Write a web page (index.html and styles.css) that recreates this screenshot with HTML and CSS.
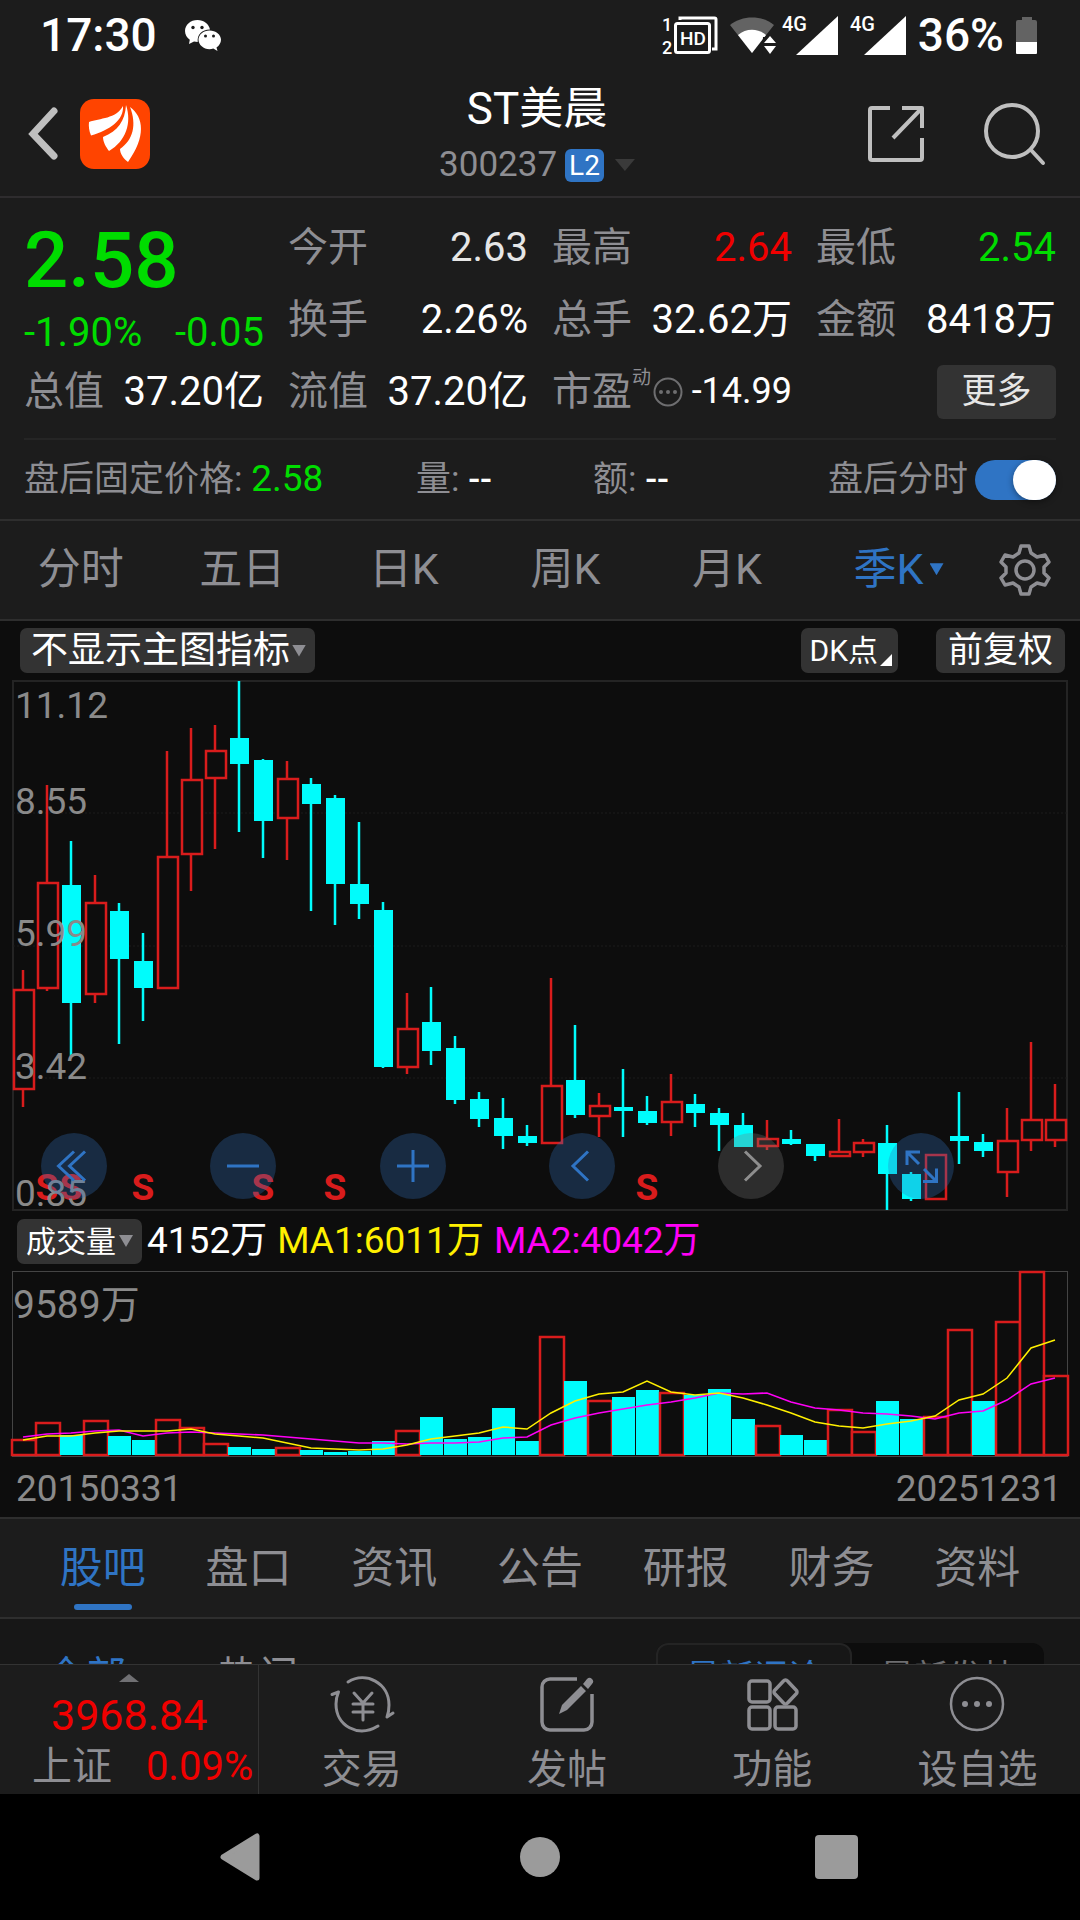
FILE: index.html
```html
<!DOCTYPE html>
<html lang="zh-CN">
<head>
  <meta charset="UTF-8">
  <meta name="viewport" content="width=device-width, initial-scale=1.0">
  <title>ST美晨 300237</title>
  <link rel="stylesheet" href="styles.css">
</head>
<body>
  <div class="app">

    <div class="status-bar">
      <span class="clock">17:30</span>
      <svg class="wechat" width="36" height="32" viewBox="0 0 36 32">
        <path fill="#fff" d="M12.500 0C5.600 0 0 4.900 0 11c0 3.600 1.900 6.700 4.800 8.700L4 24l5-2.600c1.200.3 2.300.5 3.700.5C12 14.500 17 9.500 25 9.600 24 4 18.800 0 12.500 0Z"/>
        <path fill="#fff" d="M24.500 10.500c-6 0-11 4.200-11 9.300s5 9.400 11 9.400c1.400 0 2.600-.2 3.800-.6L32.500 31l-1-3.600c2.700-1.700 4.500-4.400 4.500-7.600 0-5.100-5.200-9.300-11.500-9.300Z"/>
        <g fill="#1c1c1c"><circle cx="8" cy="7.500" r="1.700"/><circle cx="17" cy="7.500" r="1.700"/><circle cx="20.500" cy="16" r="1.500"/><circle cx="28.500" cy="16" r="1.500"/></g>
      </svg>
      <div class="status-icons">
        <svg width="56" height="40" viewBox="0 0 56 40">
          <g fill="none" stroke="#fff" stroke-width="3">
            <rect x="13.500" y="7.500" width="34" height="29" rx="2"/>
            <path d="M18 4V2h34.500a1.500 1.500 0 0 1 1.500 1.500V33h-4"/>
          </g>
          <text class="svg-num" x="0" y="15" font-size="18">1</text>
          <text class="svg-num" x="0" y="38" font-size="18">2</text>
          <text class="svg-num" x="18" y="29" font-size="19">HD</text>
        </svg>
        <svg class="wifi" width="46" height="40" viewBox="0 0 46 40">
          <path fill="#636363" d="M0 9C12-1 32-1 44 9L22 37Z"/>
          <path fill="#fff" d="M8 19c8-7 20-7 28 0L22 37Z"/>
          <path fill="#1c1c1c" d="M33 21h13v19H32z"/>
          <path fill="#fff" d="M40 20l6 7H34zM34 30h12l-6 8z"/>
        </svg>
        <svg width="56" height="40" viewBox="0 0 56 40">
          <text class="svg-num" x="0" y="15" font-size="20">4G</text>
          <path fill="#fff" d="M56 0v39H14z"/>
        </svg>
        <svg width="56" height="40" viewBox="0 0 56 40">
          <text class="svg-num" x="0" y="15" font-size="20">4G</text>
          <path fill="#fff" d="M56 0v39H14z"/>
        </svg>
        <span class="clock">36%</span>
        <svg width="22" height="40" viewBox="0 0 22 40">
          <path fill="#636363" d="M6 1h10v3h3a2 2 0 0 1 2 2v21H0V6a2 2 0 0 1 2-2h4z"/>
          <path fill="#fff" d="M0 26h21v11a1 1 0 0 1-1 1H1a1 1 0 0 1-1-1z"/>
        </svg>
      </div>
    </div>

    <header class="header">
      <div class="header-left">
        <button class="icon-btn" aria-label="返回">
          <svg width="30" height="56" viewBox="0 0 30 56" fill="none" stroke="#bfbfbf" stroke-width="7" stroke-linecap="round" stroke-linejoin="miter"><path d="M26 5L5 28l21 22"/></svg>
        </button>
        <svg width="70" height="70" viewBox="0 0 70 70">
          <rect width="70" height="70" rx="14" fill="#ff4400"/>
          <g fill="#fff">
            <path d="M9 23C20 19 36 20 43 7c1 14-13 24-32 29.500C9 32 8.500 27 9 23Z"/>
            <path d="M46 6c6 18 0 36-17 46-3-4-6-9-6-14C38 32 45 22 46 6Z"/>
            <path d="M50 8c14 10 16 30-2 55-4-3-8-8-8-13C53 41 57 26 50 8Z"/>
          </g>
        </svg>
      </div>
      <div class="header-title">
        <h1>ST美晨</h1>
        <button class="stock-code">300237 <span class="badge">L2</span><i class="tri tri-code"></i></button>
      </div>
      <div class="header-right">
        <button class="icon-btn" aria-label="分享">
          <svg width="56" height="56" viewBox="0 0 56 56" fill="none" stroke="#bfbfbf" stroke-width="4" stroke-linejoin="round"><path d="M22 2H4a2 2 0 0 0-2 2v48a2 2 0 0 0 2 2h48a2 2 0 0 0 2-2V32M34 2h20v20M54 2L25 32"/></svg>
        </button>
        <button class="icon-btn" aria-label="搜索">
          <svg width="62" height="62" viewBox="0 0 62 62" fill="none" stroke="#bfbfbf" stroke-width="4" stroke-linecap="round"><circle cx="28" cy="28" r="26"/><path d="M47 47l12 13"/></svg>
        </button>
      </div>
    </header>

    <section class="quote">
      <div class="price-box">
        <div class="price green">2.58</div>
        <div class="change green"><span>-1.90%</span><span>-0.05</span></div>
      </div>
      <div class="cell"><span class="label">今开</span><span class="soft">2.63</span></div>
      <div class="cell"><span class="label">最高</span><span class="red">2.64</span></div>
      <div class="cell"><span class="label">最低</span><span class="green">2.54</span></div>
      <div class="cell"><span class="label">换手</span><span>2.26%</span></div>
      <div class="cell"><span class="label">总手</span><span>32.62万</span></div>
      <div class="cell"><span class="label">金额</span><span>8418万</span></div>
      <div class="cell"><span class="label">总值</span><span>37.20亿</span></div>
      <div class="cell"><span class="label">流值</span><span>37.20亿</span></div>
      <div class="cell">
        <span class="label pe">市盈<sup>动</sup>
          <svg width="30" height="30" viewBox="0 0 30 30"><circle cx="15" cy="15" r="13.500" fill="none" stroke="#6e6e70" stroke-width="2"/><g fill="#6e6e70"><circle cx="8" cy="15" r="2"/><circle cx="15" cy="15" r="2"/><circle cx="22" cy="15" r="2"/></g></svg>
        </span>
        <span class="small">-14.99</span>
      </div>
      <div class="cell cell-more"><button class="more">更多</button></div>
    </section>

    <section class="after-hours">
      <div class="ah-item">盘后固定价格: <span class="ah-num green">2.58</span></div>
      <div class="ah-item">量: <b>--</b></div>
      <div class="ah-item">额: <b>--</b></div>
      <label class="ah-item ah-switch">盘后分时 <input type="checkbox" class="switch" checked></label>
    </section>

    <nav class="period-tabs">
      <button>分时</button>
      <button>五日</button>
      <button>日K</button>
      <button>周K</button>
      <button>月K</button>
      <button class="active"><span>季K<i class="tri tri-period"></i></span></button>
      <button class="gear" aria-label="设置">
        <svg width="52" height="54" viewBox="0 0 52 54" fill="none" stroke="#8e8e93" stroke-width="3.500" stroke-linejoin="round"><path d="M22 3h8l2 7 6 4 8-2 4 7-5 5v6l5 5-4 7-8-2-6 4-2 7h-8l-2-7-6-4-8 2-4-7 5-5v-6l-5-5 4-7 8 2 6-4z"/><circle cx="26" cy="27" r="9"/></svg>
      </button>
    </nav>

    <section class="charts">
      <div class="chart-tools">
        <button class="chip chip-main">不显示主图指标<i class="tri tri-chip"></i></button>
        <button class="chip chip-dk">DK点<i class="corner"></i></button>
        <button class="chip">前复权</button>
      </div>
      <div class="k-chart">
        <svg id="kline" viewBox="0 0 1080 532"></svg>
        <div class="chart-controls">
          <button class="round" aria-label="最左"><svg viewBox="0 0 66 66"><path d="M33 18.500L17.500 33 33 47.500M44 18.500L28.500 33 44 47.500"/></svg></button>
          <button class="round" aria-label="缩小"><svg viewBox="0 0 66 66"><path d="M17 33h32"/></svg></button>
          <button class="round" aria-label="放大"><svg viewBox="0 0 66 66"><path d="M17 33h32M33 17v32"/></svg></button>
          <button class="round" aria-label="左移"><svg viewBox="0 0 66 66"><path d="M39 18.500L24 33l15 14.500"/></svg></button>
          <button class="round round-off" aria-label="右移"><svg viewBox="0 0 66 66"><path d="M27 18.500L42 33 27 47.500"/></svg></button>
          <button class="round" aria-label="全屏"><svg viewBox="0 0 66 66"><path d="M32 19H19v13M19 19l12 12M35 48.500h13.500v-13M48.500 48.500L36 36"/></svg></button>
        </div>
      </div>
      <div class="vol-legend">
        <button class="chip chip-vol">成交量<i class="tri tri-chip"></i></button>
        <span>4152万</span>
        <span class="ma1">MA1:6011万</span>
        <span class="ma2">MA2:4042万</span>
      </div>
      <svg id="volume" viewBox="0 0 1080 188"></svg>
      <div class="dates"><span>20150331</span><span>20251231</span></div>
    </section>

    <nav class="info-tabs">
      <a href="#" class="active">股吧</a>
      <a href="#">盘口</a>
      <a href="#">资讯</a>
      <a href="#">公告</a>
      <a href="#">研报</a>
      <a href="#">财务</a>
      <a href="#">资料</a>
    </nav>

    <section class="feed">
      <div class="feed-head">
        <a href="#" class="active">全部</a>
        <a href="#">热门</a>
        <div class="segment">
          <button class="active">最新评论</button>
          <button>最新发帖</button>
        </div>
      </div>
    </section>

    <footer class="bottom-bar">
      <a href="#" class="index-box">
        <i class="tri-up"></i>
        <span class="index-value">3968.84</span>
        <span class="index-row"><span class="label">上证</span><span>0.09%</span></span>
      </a>
      <a href="#" class="action">
        <svg width="64" height="56" viewBox="0 0 64 56" fill="none" stroke="#8e8e93" stroke-width="3" stroke-linejoin="round" stroke-linecap="round">
          <path d="M18 6C36-5 59 7 59 29c0 4-.5 8-2 12l6-4"/>
          <path d="M48 50C28 62 6 50 6 28c0-4 .8-8 2.500-12L2 18.500"/>
          <path d="M24 17l9 10 9-10M33 27v17M23 28h20M23 36h20"/>
        </svg>
        <span>交易</span>
      </a>
      <a href="#" class="action">
        <svg width="54" height="56" viewBox="0 0 54 56">
          <path d="M37 3H10a8 8 0 0 0-8 8v35a8 8 0 0 0 8 8h34a8 8 0 0 0 8-8V18" fill="none" stroke="#8e8e93" stroke-width="3.500"/>
          <path fill="#8e8e93" d="M19 38l3-9 19-19 5 5-19 19zM43 8l4-5a3 3 0 0 1 5 5l-4 5z"/>
        </svg>
        <span>发帖</span>
      </a>
      <a href="#" class="action">
        <svg width="54" height="56" viewBox="0 0 54 56" fill="none" stroke="#8e8e93" stroke-width="3.500" stroke-linejoin="round">
          <rect x="4" y="5" width="21" height="21" rx="3"/>
          <rect x="4" y="31" width="21" height="22" rx="3"/>
          <rect x="30" y="31" width="21" height="22" rx="3"/>
          <path d="M38.500 5a2.500 2.500 0 0 1 4 0l8.500 9a2.500 2.500 0 0 1 0 4l-8.500 9a2.500 2.500 0 0 1-4 0l-8.500-9a2.500 2.500 0 0 1 0-4z"/>
        </svg>
        <span>功能</span>
      </a>
      <a href="#" class="action">
        <svg width="56" height="56" viewBox="0 0 56 56"><circle cx="28" cy="28" r="26" fill="none" stroke="#8e8e93" stroke-width="2.500"/><g fill="#8e8e93"><circle cx="16" cy="28" r="3"/><circle cx="28" cy="28" r="3"/><circle cx="40" cy="28" r="3"/></g></svg>
        <span>设自选</span>
      </a>
    </footer>

    <div class="system-nav">
      <button aria-label="Back"><svg width="44" height="50" viewBox="0 0 44 50"><path d="M36 4v42L2 25z" fill="#9b9b9b" stroke="#9b9b9b" stroke-width="5" stroke-linejoin="round"/></svg></button>
      <button aria-label="Home"><svg width="44" height="50" viewBox="0 0 44 50"><circle cx="22" cy="25" r="20" fill="#9b9b9b"/></svg></button>
      <button aria-label="Recent"><svg width="44" height="50" viewBox="0 0 44 50"><rect x="0" y="3" width="43" height="44" rx="4" fill="#9b9b9b"/></svg></button>
    </div>
  </div>

  <script src="script.js"></script>
</body>
</html>
```
FILE: styles.css
```css
* {
  box-sizing: border-box;
}

body {
  margin: 0;
  background: #1c1c1c;
  color: #fff;
  font-family: Roboto, "Noto Sans CJK SC", sans-serif;
  font-size: 40px;
  line-height: 1.2;
}

button {
  border: none;
  background: none;
  padding: 0;
  margin: 0;
  color: inherit;
  font-family: inherit;
  font-size: inherit;
  line-height: inherit;
}

a {
  color: inherit;
  text-decoration: none;
}

svg {
  display: block;
  overflow: visible;
}

.app {
  height: 100vh;
  display: flex;
  flex-direction: column;
}

.app > * {
  flex-shrink: 0;
}

.green { color: #00dc00; }
.red { color: #f00000; }
.soft { color: #e6e6e6; }
.label { color: #8e8e93; }
.small { font-size: 36px; }

.tri {
  display: inline-block;
  width: 14px;
  height: 12px;
  background: #8e8e93;
  clip-path: polygon(0 0, 100% 0, 50% 100%);
}

/* status bar */
.status-bar {
  height: 71px;
  padding: 0 42px 0 40px;
  display: flex;
  align-items: center;
}

.clock {
  font-size: 46px;
  font-weight: 500;
}

.wechat {
  margin-left: 28px;
}

.status-icons {
  margin-left: auto;
  display: flex;
  align-items: center;
  gap: 12px;
}

.wifi {
  margin-right: -6px;
}

.svg-num {
  font-family: Roboto, sans-serif;
  font-weight: 500;
  fill: #fff;
}

/* header */
.header {
  height: 127px;
  padding: 0 34px 0 28px;
  display: grid;
  grid-template-columns: 1fr auto 1fr;
  align-items: center;
  border-bottom: 2px solid #2e2c2e;
}

.header-left,
.header-right {
  display: flex;
  align-items: center;
}

.header-left {
  gap: 22px;
}

.header-right {
  justify-content: flex-end;
  gap: 60px;
}

.header-title {
  padding-top: 5px;
  display: flex;
  flex-direction: column;
  align-items: center;
}

.header-title h1 {
  margin: 0;
  font-size: 44px;
  font-weight: 400;
  line-height: 58px;
}

.stock-code {
  display: flex;
  align-items: center;
  color: #8e8e93;
  font-size: 35px;
  line-height: 54px;
}

.badge {
  margin-left: 8px;
  padding: 0 4px;
  border-radius: 6px;
  background: #2f74c4;
  color: #fff;
  font-size: 28px;
  line-height: 33px;
}

.tri-code {
  width: 20px;
  margin-left: 11px;
  background: #3a3a3a;
}

/* quote numbers */
.quote {
  margin: 0 24px;
  padding: 14px 0 10px;
  display: grid;
  grid-template-columns: repeat(4, 1fr);
  grid-auto-rows: 72px;
  column-gap: 24px;
  border-bottom: 2px solid #252525;
}

.price-box {
  grid-row: span 2;
}

.price {
  font-size: 78px;
  font-weight: 500;
  line-height: 98px;
}

.change {
  display: flex;
  justify-content: space-between;
  line-height: 46px;
}

.cell {
  display: flex;
  justify-content: space-between;
  align-items: center;
  white-space: nowrap;
}

.cell-more {
  justify-content: flex-end;
}

.pe {
  display: flex;
  align-items: center;
}

.pe sup {
  align-self: flex-start;
  font-size: 19px;
  line-height: 20px;
}

.pe svg {
  margin-left: 2px;
}

.more {
  width: 119px;
  height: 54px;
  border-radius: 6px;
  background: #333;
  color: #e6e6e6;
  font-size: 35px;
}

/* after hours row */
.after-hours {
  padding: 0 24px;
  height: 81px;
  display: grid;
  grid-template-columns: 392fr 177fr 200fr 263fr;
  align-items: center;
  border-bottom: 2px solid #2e2e2e;
  color: #8e8e93;
  font-size: 35px;
  white-space: nowrap;
}

.after-hours b {
  color: #fff;
  font-weight: 500;
}

.ah-num {
  font-size: 37px;
}

.ah-switch {
  display: flex;
  align-items: center;
  justify-content: flex-end;
  gap: 7px;
}

.switch {
  appearance: none;
  margin: 0;
  width: 81px;
  height: 40px;
  border-radius: 20px;
  background: #444;
  display: flex;
}

.switch::before {
  content: "";
  width: 43px;
  height: 40px;
  border-radius: 20px;
  background: #fff;
  box-shadow: 0 2px 6px rgba(0, 0, 0, 0.4);
}

.switch:checked {
  background: #2f74c4;
  justify-content: flex-end;
}

/* period tabs */
.period-tabs {
  height: 100px;
  display: flex;
  border-bottom: 2px solid #2e2e2e;
  color: #8e8e93;
  font-size: 43px;
}

.period-tabs button {
  flex: 162;
}

.period-tabs .gear {
  flex: 111;
  display: flex;
  align-items: center;
  justify-content: center;
}

.period-tabs .active {
  color: #2f74c4;
}

.period-tabs span {
  position: relative;
}

.tri-period {
  position: absolute;
  left: 100%;
  top: 50%;
  margin: -6px 0 0 6px;
  background: #2f74c4;
}

/* charts */
.charts {
  background: #0d0d0d;
  border-bottom: 2px solid #2e2e2e;
}

.chart-tools {
  padding: 7px 15px 7px 20px;
  display: flex;
}

.chip {
  height: 45px;
  padding: 0 12px;
  border-radius: 7px;
  background: #333;
  font-size: 35px;
  line-height: 45px;
  white-space: nowrap;
}

.chip-main {
  margin-right: auto;
  padding: 0 9px 0 11px;
  display: flex;
  align-items: center;
  gap: 2px;
  font-size: 37px;
}

.chip-dk {
  margin-right: 38px;
  padding: 0 6px 0 8px;
  display: flex;
  align-items: center;
  font-size: 30px;
}

.corner {
  align-self: flex-end;
  width: 12px;
  height: 12px;
  margin: 0 0 7px 2px;
  background: #fff;
  clip-path: polygon(100% 0, 100% 100%, 0 100%);
}

.k-chart {
  position: relative;
}

.k-chart svg,
#volume {
  width: 100%;
}

.chart-controls {
  position: absolute;
  left: 0;
  right: 0;
  bottom: 13px;
  padding: 0 11.7% 0 3.8%;
  display: flex;
  justify-content: space-between;
}

.round {
  width: 66px;
  height: 66px;
  border-radius: 50%;
  background: rgba(50, 112, 190, 0.3);
}

.round path {
  fill: none;
  stroke: #2f74c4;
  stroke-width: 3;
}

.round-off {
  background: rgba(120, 120, 120, 0.3);
}

.round-off path {
  stroke: #8e8e8e;
}

.axis-text {
  fill: #8a8a8a;
  font-family: Roboto, "Noto Sans CJK SC", sans-serif;
  font-size: 37px;
}

.axis-vol {
  font-size: 39px;
}

.sell-mark {
  fill: #d91c1c;
  font-family: Roboto, sans-serif;
  font-size: 37px;
  font-weight: 700;
  text-anchor: middle;
}

.frame {
  fill: none;
  stroke: #242424;
  stroke-width: 2;
}

.frame-vol {
  stroke: #444;
  stroke-width: 1;
}

.grid-line {
  stroke: #1d1d1d;
  stroke-width: 1;
  stroke-dasharray: 2 2;
}

.up {
  fill: #0d0d0d;
  stroke: #d91c1c;
  stroke-width: 2.5;
}

.down {
  fill: #00fcfc;
}

.wick-up {
  stroke: #d91c1c;
  stroke-width: 2.5;
}

.wick-down {
  stroke: #00fcfc;
  stroke-width: 2.5;
}

.line-ma1,
.line-ma2 {
  fill: none;
  stroke: #fff000;
  stroke-width: 1.5;
}

.line-ma2 {
  stroke: #ff00f6;
}

.vol-legend {
  height: 58px;
  padding-left: 17px;
  display: flex;
  align-items: center;
  font-size: 37px;
  line-height: 44px;
  white-space: nowrap;
}

.vol-legend span {
  margin-right: 10px;
}

.chip-vol {
  margin-right: 5px;
  padding: 0 9px;
  display: flex;
  align-items: center;
  gap: 3px;
  font-size: 30px;
}

.ma1 { color: #fff000; }
.ma2 { color: #ff00f6; }

.dates {
  padding: 3px 18px 0 16px;
  display: flex;
  justify-content: space-between;
  color: #8a8a8a;
  font-size: 37px;
  line-height: 56px;
}

/* info tabs */
.info-tabs {
  height: 100px;
  padding: 0 30px;
  display: flex;
  border-bottom: 2px solid #2e2e2e;
  color: #8e8e93;
  font-size: 43px;
  line-height: 98px;
}

.info-tabs a {
  flex: 1;
  text-align: center;
  position: relative;
}

.info-tabs .active,
.feed .active {
  color: #2f74c4;
}

.info-tabs .active::after {
  content: "";
  position: absolute;
  left: 50%;
  bottom: 7px;
  width: 58px;
  height: 6px;
  margin-left: -29px;
  border-radius: 3px;
  background: #2f74c4;
}

.feed {
  flex: 1 1 0;
  min-height: 0;
  overflow: hidden;
  background: #171717;
}

.feed-head {
  padding: 24px 36px 24px 46px;
  display: flex;
  align-items: center;
  gap: 92px;
  color: #8e8e93;
  font-size: 40px;
}

.segment {
  margin-left: auto;
  width: 388px;
  height: 68px;
  display: flex;
  border-radius: 12px;
  background: #0d0d0d;
  color: #6e6e70;
  font-size: 34px;
}

.segment button {
  flex: 1;
  border-radius: 12px;
}

.segment .active {
  background: #171717;
  border: 2px solid #242424;
}

/* bottom bar */
.bottom-bar {
  height: 130px;
  display: flex;
  border-top: 1px solid #333;
  background: #1c1c1c;
  color: #8e8e93;
}

.index-box {
  width: 24%;
  padding: 9px 5px 0 32px;
  display: flex;
  flex-direction: column;
  border-right: 1px solid #333;
  color: #f00000;
}

.tri-up {
  width: 20px;
  height: 8px;
  margin: 0 0 5px 87px;
  background: #707073;
  clip-path: polygon(50% 0, 100% 100%, 0 100%);
}

.index-value {
  padding-left: 19px;
  font-size: 43px;
  line-height: 56px;
}

.index-row {
  display: flex;
  justify-content: space-between;
  line-height: 48px;
}

.action {
  flex: 1;
  padding-top: 11px;
  display: flex;
  flex-direction: column;
  align-items: center;
}

.action span {
  margin-top: 14px;
  line-height: 48px;
}

/* android keys */
.system-nav {
  height: 126px;
  padding: 0 94px;
  display: flex;
  background: #000;
}

.system-nav button {
  flex: 1;
  display: flex;
  align-items: center;
  justify-content: center;
}
```
FILE: script.js
```js
// [up, high, bodyTop, bodyBottom, low, volumeTop]
const bars = [
  [1, 290, 310, 409, 427, 170], [1, 105, 203, 308, 311, 153], [0, 161, 205, 323, 376, 165],
  [1, 195, 223, 314, 323, 151], [0, 223, 231, 279, 364, 166], [0, 253, 281, 308, 341, 170],
  [1, 71, 177, 308, 308, 150], [1, 48, 100, 174, 211, 158], [1, 45, 71, 98, 169, 174],
  [0, 1, 58, 84, 152, 177], [0, 79, 80, 141, 178, 179], [1, 81, 99, 138, 180, 178],
  [0, 98, 104, 124, 231, 180], [0, 115, 118, 204, 245, 182], [0, 142, 204, 224, 239, 181],
  [0, 222, 230, 387, 388, 171], [1, 313, 349, 387, 394, 161], [0, 307, 342, 371, 385, 147],
  [0, 356, 368, 420, 424, 169], [0, 412, 419, 439, 447, 167], [0, 418, 438, 456, 469, 138],
  [0, 445, 456, 463, 466, 171], [1, 298, 406, 463, 463, 67], [0, 345, 400, 435, 438, 111],
  [1, 413, 426, 436, 457, 131], [0, 389, 427, 431, 457, 127], [0, 416, 431, 443, 445, 120],
  [1, 394, 422, 442, 456, 123], [0, 414, 424, 433, 447, 125], [0, 428, 433, 445, 471, 119],
  [0, 433, 445, 467, 467, 149], [1, 440, 459, 466, 470, 156], [0, 450, 459, 464, 465, 165],
  [0, 464, 464, 476, 481, 170], [1, 439, 472, 476, 476, 140], [1, 459, 463, 472, 477, 162],
  [0, 445, 463, 494, 530, 131], [0, 492, 494, 519, 521, 149], [1, 475, 475, 519, 519, 147],
  [0, 412, 456, 461, 484, 60], [0, 454, 462, 471, 477, 131], [1, 428, 461, 492, 517, 52],
  [1, 362, 440, 460, 471, 2], [1, 404, 440, 460, 467, 106]
];
const ma1 = [170, 166, 166, 163, 161, 161, 161, 159, 164, 166, 168, 173, 178, 179, 180, 179, 175, 169, 166, 163, 157, 159,
  143, 131, 124, 122, 111, 122, 125, 123, 128, 135, 143, 152, 156, 158, 154, 151, 146, 130, 124, 108, 78, 70];
const ma2 = [167, 164, 163, 161, 160, 166, 163, 162, 163, 164, 165, 167, 169, 171, 173, 173, 174, 173, 173, 172, 168, 167,
  155, 148, 143, 139, 135, 132, 128, 123, 124, 123, 132, 138, 140, 143, 144, 146, 149, 143, 141, 130, 114, 108];
const redVolume = [39]; // falling candle with a rising volume bar
const sells = [1, 2, 5, 10, 13, 26];
const labels = [["11.12", 38], ["8.55", 134], ["5.99", 266], ["3.42", 399], ["0.85", 526]];

const x = i => 23 + i * 24;

let k = '<rect class="frame" x="13" y="1" width="1054" height="529"/>';
[133, 266, 398].forEach(y => {
  k += `<line class="grid-line" x1="13" x2="1067" y1="${y}" y2="${y}"/>`;
});
bars.forEach(([up, high, top, bottom, low], i) => {
  const kind = up ? "up" : "down";
  k += `<line class="wick-${kind}" x1="${x(i)}" x2="${x(i)}" y1="${high}" y2="${low}"/>`;
  k += up
    ? `<rect class="up" x="${x(i) - 9}" y="${top}" width="20" height="${bottom - top}"/>`
    : `<rect class="down" x="${x(i) - 9}" y="${top}" width="19" height="${bottom - top}"/>`;
});
sells.forEach(i => {
  k += `<text class="sell-mark" x="${x(i)}" y="520">S</text>`;
});
labels.forEach(([text, y]) => {
  k += `<text class="axis-text" x="15" y="${y}">${text}</text>`;
});
document.getElementById("kline").innerHTML = k;

let v = '<rect class="frame frame-vol" x="12.5" y="1.5" width="1055" height="185"/>';
bars.forEach(([up, , , , , top], i) => {
  v += up || redVolume.includes(i)
    ? `<rect class="up" x="${x(i) - 11}" y="${top}" width="24" height="${185 - top}"/>`
    : `<rect class="down" x="${x(i) - 11}" y="${top}" width="23" height="${185 - top}"/>`;
});
const points = list => list.map((y, i) => x(i) + "," + y).join(" ");
v += `<polyline class="line-ma2" points="${points(ma2)}"/>`;
v += `<polyline class="line-ma1" points="${points(ma1)}"/>`;
v += '<text class="axis-text axis-vol" x="13" y="48">9589万</text>';
document.getElementById("volume").innerHTML = v;
```
